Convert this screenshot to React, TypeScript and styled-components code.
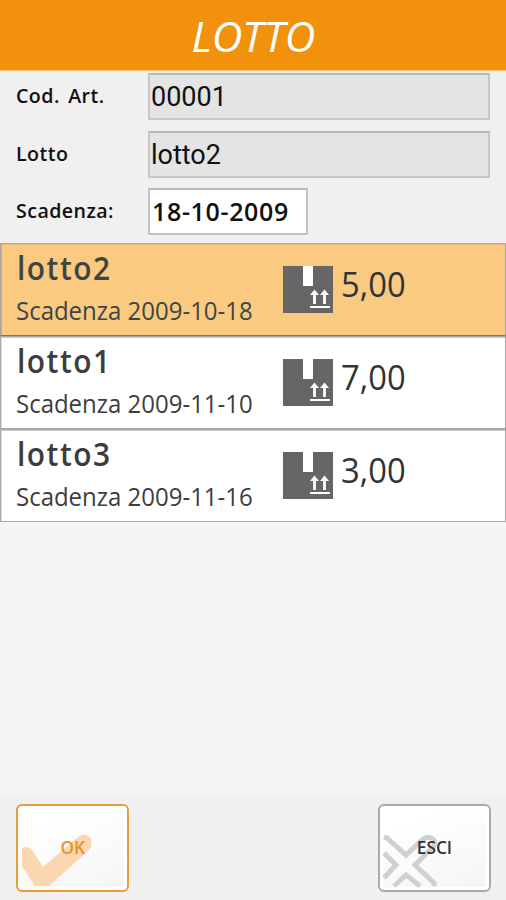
import React from "react";
import styled, { createGlobalStyle } from "styled-components";

const Global = createGlobalStyle`
  * { box-sizing: border-box; }
  body { margin: 0; background: #f4f4f4; }
`;

const Screen = styled.main`
  width: 506px;
  height: 900px;
  display: flex;
  flex-direction: column;
  overflow: hidden;
  background: #f4f4f4;
  font-family: "Open Sans", "Noto Sans", sans-serif;
  color: #111;
`;

const Header = styled.header`
  height: 71px;
  flex: none;
  display: flex;
  justify-content: center;
  background: #f1910c;
  border-bottom: 1px solid #f5c07c;
`;

const Title = styled.h1`
  margin: 0;
  padding-left: 1px;
  font-size: 42px;
  line-height: 71px;
  font-weight: 500;
  font-style: italic;
  color: #fff;
  transform: scaleX(1.01);
`;

const Form = styled.section`
  height: 172px;
  flex: none;
  display: grid;
  grid-template-columns: 132px 342px;
  grid-template-rows: repeat(3, 47px);
  row-gap: 10.5px;
  padding: 2px 16px 0;
  background: #f0f0f0;
`;

const Label = styled.label<{ $gap?: number }>`
  font-size: 20px;
  font-weight: 600;
  line-height: 46px;
  letter-spacing: 0.45px;
  word-spacing: ${(p) => p.$gap ?? 0}px;
  white-space: nowrap;
  transform: scaleX(0.98);
  transform-origin: left;
`;

const Field = styled.div<{ $editable?: boolean }>`
  width: ${(p) => (p.$editable ? "160px" : "342px")};
  height: 47px;
  padding-left: ${(p) => (p.$editable ? 2 : 1)}px;
  border: 2px solid ${(p) => (p.$editable ? "#c4c4c4" : "#c6c6c6")};
  border-top-color: #b8b8b8;
  background: ${(p) => (p.$editable ? "#fff" : "#e4e4e4")};
`;

const Value = styled.span<{ $bold?: boolean }>`
  display: block;
  width: max-content;
  font-family: ${(p) => (p.$bold ? '"Open Sans", sans-serif' : "Roboto, sans-serif")};
  font-size: ${(p) => (p.$bold ? 25 : 27)}px;
  font-weight: ${(p) => (p.$bold ? 600 : 400)};
  letter-spacing: ${(p) => (p.$bold ? 0.65 : 0)}px;
  line-height: ${(p) => (p.$bold ? 43 : 45)}px;
`;

const List = styled.ul`
  list-style: none;
  margin: 0;
  padding: 0;
  flex: 1;
`;

const Row = styled.li<{ $selected?: boolean }>`
  height: 93px;
  display: grid;
  grid-template-columns: 266px 58px 1fr;
  padding-left: 16px;
  border: 1px solid #a9a9a9;
  border-bottom-color: ${(p) => (p.$selected ? "#8f744b" : "#a9a9a9")};
  box-shadow: inset 1px 0 ${(p) => (p.$selected ? "#d8ad6c" : "#dddddd")}, inset 0 1px ${(p) => (p.$selected ? "#e5ba7b" : "#c9c9c9")};
  background: ${(p) => (p.$selected ? "#f9ca80" : "#fff")};
  color: ${(p) => (p.$selected ? "#3e4544" : "#3d3d3d")};
`;

const Name = styled.div`
  width: max-content;
  font-size: 32px;
  font-weight: 600;
  line-height: 48px;
  letter-spacing: 1.6px;
  transform: scaleX(0.935);
  transform-origin: left;
`;

const Expiry = styled.div`
  width: max-content;
  margin-left: -1px;
  font-size: 25px;
  line-height: 36px;
  transform: scaleX(0.959);
  transform-origin: left;
`;

const Box = styled.svg`
  display: block;
  margin-top: 22px;
`;

const Quantity = styled.div`
  width: max-content;
  font-size: 35px;
  line-height: 80px;
  transform: scaleX(0.935);
  transform-origin: left;
  color: #2d3536;
`;

const Footer = styled.footer`
  height: 104px;
  flex: none;
  display: flex;
  justify-content: space-between;
  padding: 8px 15px 0 16px;
  background: #f0f0f0;
`;

const Action = styled.button<{ $primary?: boolean }>`
  width: 113px;
  height: 88px;
  padding: 0;
  display: grid;
  border: 2px solid ${(p) => (p.$primary ? "#eb9c38" : "#aaa")};
  border-radius: 6px;
  background: linear-gradient(160deg, #fff 20%, #f5f5f5);
  box-shadow: inset 0 0 0 3px #fff;
  color: ${(p) => (p.$primary ? "#e99126" : "#333")};
  font: 600 18px "Open Sans", sans-serif;
  > * { grid-area: 1 / 1; }
`;

const Caption = styled.span`
  place-self: center;
  z-index: 1;
  transform: translateY(-1px) scaleX(0.96);
`;

const PackageIcon = () => (
  <Box width="50" height="47" viewBox="0 0 50 47">
    <path d="M0 0h20v20h10V0h20v47H0z" fill="#666" />
    <path d="M20 0h10v20H20z" fill="#fff" />
    <path d="M31.5 38V27M41.5 38V27" stroke="#fff" strokeWidth="2.8" />
    <path d="M27 41h20" stroke="#fff" strokeWidth="2" />
    <path d="M27 29l4.5-5.5L36 29zM37 29l4.5-5.5L46 29z" fill="#fff" />
  </Box>
);

const lots = [
  { name: "lotto2", date: "2009-10-18", qty: "5,00" },
  { name: "lotto1", date: "2009-11-10", qty: "7,00" },
  { name: "lotto3", date: "2009-11-16", qty: "3,00" },
];

export default function App() {
  return (
    <Screen>
      <Global />
      <Header><Title>LOTTO</Title></Header>
      <Form>
        <Label $gap={3}>Cod. Art.</Label>
        <Field><Value>00001</Value></Field>
        <Label>Lotto</Label>
        <Field><Value>lotto2</Value></Field>
        <Label>Scadenza:</Label>
        <Field $editable><Value $bold>18-10-2009</Value></Field>
      </Form>
      <List>
        {lots.map((lot, i) => (
          <Row key={lot.name} $selected={i === 0}>
            <div>
              <Name>{lot.name}</Name>
              <Expiry>Scadenza {lot.date}</Expiry>
            </div>
            <PackageIcon />
            <Quantity>{lot.qty}</Quantity>
          </Row>
        ))}
      </List>
      <Footer>
        <Action $primary>
          <svg width="109" height="84" viewBox="0 0 109 84">
            <path d="M4 42Q10 39 14 44L25 61 60 31Q67 26 72 31 76 38 71 44L31 80H17L4 60z" fill="#fad7b0" />
          </svg>
          <Caption>OK</Caption>
        </Action>
        <Action>
          <svg width="109" height="84" viewBox="0 0 109 84">
            <path d="M4 31L7 32 26 49 43 33Q50 29 54 34 56 38 52 42L35 59 54 77V80M4 47L16 59 4 72M14 80L26 69 40 80" fill="none" stroke="#d0d0d0" strokeWidth="5" />
          </svg>
          <Caption>ESCI</Caption>
        </Action>
      </Footer>
    </Screen>
  );
}
